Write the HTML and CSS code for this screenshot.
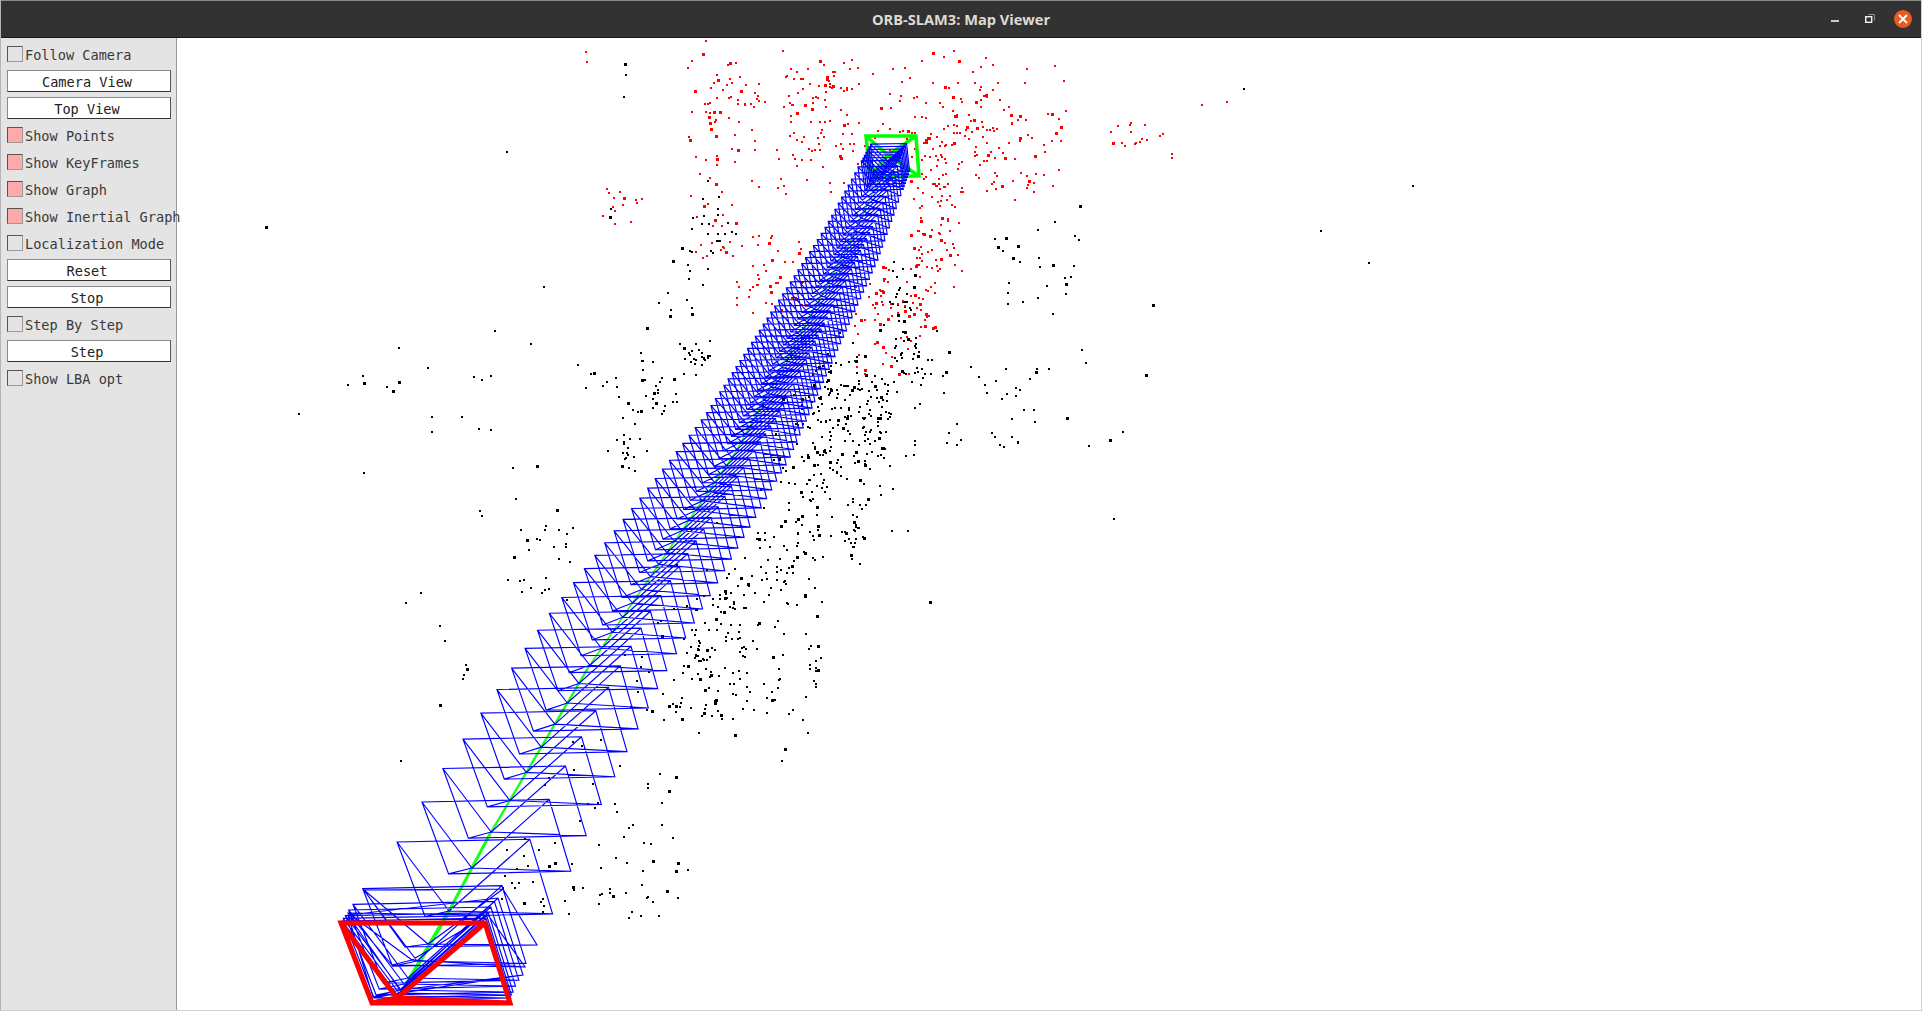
FILE: index.html
```html
<!DOCTYPE html>
<html lang="en">
<head>
    <meta charset="UTF-8">
    <title>ORB-SLAM3: Map Viewer</title>
    <link rel="stylesheet" href="styles.css">
</head>
<body>
<div class="window">
    <header class="titlebar">
        <span></span>
        <h1 class="title">ORB-SLAM3: Map Viewer</h1>
        <div class="controls">
            <svg class="ctl ctl-min" width="10" height="4" viewBox="0 0 10 4"><path d="M1 2h8" stroke="#f2f2f2" stroke-width="1.6"/></svg>
            <svg class="ctl ctl-max" width="12" height="12" viewBox="0 0 12 12"><path d="M4.5 1.5h6v6" fill="none" stroke="#8f8f8f"/><rect x="1.7" y="3.7" width="6" height="5.6" fill="none" stroke="#f2f2f2" stroke-width="1.4"/></svg>
            <svg class="ctl ctl-close" width="20" height="20" viewBox="0 0 20 20"><circle cx="10" cy="10" r="9" fill="#ea5a22"/><path d="M6 6l8 8M14 6l-8 8" stroke="#fff" stroke-width="1.8"/></svg>
        </div>
    </header>
    <div class="content">
        <aside class="panel">
            <div class="row"><span class="check"></span><span class="label">Follow Camera</span></div>
            <div class="row"><button class="btn">Camera View</button></div>
            <div class="row"><button class="btn">Top View</button></div>
            <div class="row"><span class="check on"></span><span class="label">Show Points</span></div>
            <div class="row"><span class="check on"></span><span class="label">Show KeyFrames</span></div>
            <div class="row"><span class="check on"></span><span class="label">Show Graph</span></div>
            <div class="row"><span class="check on"></span><span class="label">Show Inertial Graph</span></div>
            <div class="row"><span class="check"></span><span class="label">Localization Mode</span></div>
            <div class="row"><button class="btn">Reset</button></div>
            <div class="row"><button class="btn">Stop</button></div>
            <div class="row"><span class="check"></span><span class="label">Step By Step</span></div>
            <div class="row"><button class="btn">Step</button></div>
            <div class="row"><span class="check"></span><span class="label">Show LBA opt</span></div>
        </aside>
        <main class="viewport">
            <svg id="map" class="map" viewBox="177 38 1744 972" width="1744" height="972"></svg>
        </main>
    </div>
</div>
<script src="script.js"></script>
</body>
</html>
```

FILE: styles.css
```css
html, body {
    margin: 0;
    height: 100%;
    overflow: hidden;
    background-color: #fff;
}

.window {
    height: 1011px;
    display: flex;
    flex-direction: column;
    box-sizing: border-box;
    border-left: 1px solid #b5b5b5;
    border-right: 1px solid #cfcfcf;
    border-bottom: 1px solid #cfcfcf;
}

.titlebar {
    height: 38px;
    flex: none;
    box-sizing: border-box;
    display: grid;
    grid-template-columns: 1fr auto 1fr;
    align-items: center;
    background-color: #333232;
    border-top: 1px solid #8a8a8a;
    border-bottom: 1px solid #161616;
}

.title {
    margin: 0;
    font-family: "Open Sans", "Noto Sans", sans-serif;
    font-size: 14.6px;
    font-weight: 700;
    color: #dfdbd2;
}

.controls {
    display: flex;
    align-items: center;
    justify-content: flex-end;
    padding-right: 8px;
}

.ctl {
    display: block;
}

.ctl-min {
    margin-right: 24px;
    margin-top: 3px;
}

.ctl-max {
    margin-right: 17px;
}

.content {
    flex: 1;
    display: flex;
    min-height: 0;
}

.panel {
    width: 176px;
    flex: none;
    box-sizing: border-box;
    padding: 5px 0 0 6px;
    background-color: #e4e4e4;
    border-right: 1px solid #999;
    position: relative;
    z-index: 1;
    font-family: "DejaVu Sans Mono", "Liberation Mono", monospace;
    font-size: 13.6px;
    color: #3a3a3a;
}

.row {
    height: 27px;
    display: flex;
    align-items: flex-start;
    white-space: nowrap;
}

.check {
    width: 16px;
    height: 16px;
    flex: none;
    box-sizing: border-box;
    margin-top: 3px;
    border: 1px solid #9a9a9a;
    border-top-color: #555;
    border-left-color: #555;
}

.check.on {
    background-color: #ffaaaa;
}

.label {
    margin-left: 2px;
    line-height: 18px;
    margin-top: 3px;
}

.btn {
    width: 164px;
    height: 22px;
    padding: 2px 4px 0 0;
    box-sizing: border-box;
    background-color: #fff;
    border: 1px solid #8c8c8c;
    border-bottom-color: #333;
    border-right-color: #555;
    border-radius: 0;
    font: inherit;
    color: #222;
}

.viewport {
    flex: 1;
    min-width: 0;
    background-color: #fff;
}

.map {
    display: block;
}
```

FILE: script.js
```js
// map viewer scene, all coordinates are page pixels
var svg = document.getElementById('map');
var NS = 'http://www.w3.org/2000/svg';

// fixed seed so the scatter is the same every time
var seed = 20317;
function rnd() {
    seed = (seed + 0x6D2B79F5) | 0;
    var t = Math.imul(seed ^ (seed >>> 15), 1 | seed);
    t = (t + Math.imul(t ^ (t >>> 7), 61 | t)) ^ t;
    return ((t ^ (t >>> 14)) >>> 0) / 4294967296;
}
function gauss() {
    return (rnd() + rnd() + rnd() + rnd() - 2) / 0.58;
}

var K = 1922 / 1568;

function addPath(d, attrs) {
    var p = document.createElementNS(NS, 'path');
    p.setAttribute('d', d);
    p.setAttribute('fill', 'none');
    for (var k in attrs) {
        p.setAttribute(k, attrs[k]);
    }
    svg.appendChild(p);
}

function dot(x, y, big) {
    var s = big ? 3 : 2;
    x = Math.round(x);
    y = Math.round(y);
    return 'M' + x + ' ' + y + 'h' + s + 'v' + s + 'h-' + s + 'z';
}

function pointsPath(list) {
    var d = '';
    list.forEach(function (p) {
        d += dot(p[0] * K, p[1] * K, rnd() < 0.15);
    });
    return d;
}

function box(list, n, x0, x1, y0, y1) {
    for (var i = 0; i < n; i++) {
        list.push([x0 + rnd() * (x1 - x0), y0 + rnd() * (y1 - y0)]);
    }
}

function blob(list, n, cx, cy, sx, sy) {
    for (var i = 0; i < n; i++) {
        list.push([cx + gauss() * sx, cy + gauss() * sy]);
    }
}

// black map points (picture coordinates of the 1568 wide view)
var black = [
    [1014, 72], [1152, 151], [1077, 188], [1116, 214], [216, 184], [413, 123], [509, 51], [510, 60], [508, 78],
    [443, 233], [243, 337], [296, 385], [403, 269], [432, 280], [325, 283], [283, 313], [295, 306], [296, 312],
    [315, 315], [320, 318], [348, 299], [325, 311], [386, 307], [392, 309], [400, 306], [352, 339], [352, 352],
    [390, 349], [400, 350], [376, 339], [418, 381], [437, 379], [420, 406], [391, 416], [392, 420], [330, 491],
    [343, 483], [358, 510], [362, 522], [380, 545], [377, 553], [358, 574], [326, 620], [454, 415], [462, 435],
    [467, 430], [414, 472], [440, 440], [908, 423], [934, 305], [940, 248], [915, 352], [905, 358], [888, 363],
    [830, 360], [870, 340], [858, 255], [880, 167], [860, 180], [830, 200], [820, 300], [855, 300], [882, 285],
    [885, 295], [780, 362], [745, 370], [740, 432], [758, 490], [670, 490], [660, 545], [657, 568], [640, 610],
    [637, 620], [498, 170], [497, 176], [585, 170], [600, 190], [445, 428], [461, 443], [378, 550], [379, 542]
];
for (var i = 0; i < 300; i++) {
    var t = rnd();
    black.push([715 - t * 150 + gauss() * 30, 300 + t * 280 + gauss() * 12]);
}
blob(black, 70, 670, 350, 22, 34);
blob(black, 30, 695, 430, 4, 14);
blob(black, 40, 715, 345, 8, 22);
blob(black, 30, 680, 320, 12, 18);
blob(black, 30, 745, 290, 12, 12);
blob(black, 30, 735, 250, 6, 22);
box(black, 26, 770, 850, 295, 365);
box(black, 24, 810, 880, 180, 250);
blob(black, 24, 550, 255, 12, 24);
blob(black, 10, 525, 300, 8, 16);
blob(black, 24, 510, 365, 7, 20);
blob(black, 16, 540, 325, 7, 8);
blob(black, 16, 570, 288, 5, 6);
blob(black, 20, 580, 185, 10, 16);
box(black, 8, 470, 510, 295, 320);
box(black, 20, 410, 470, 430, 490);
box(black, 40, 470, 565, 650, 750);
box(black, 26, 400, 470, 680, 745);
box(black, 36, 540, 670, 480, 600);
box(black, 14, 430, 560, 600, 660);
blob(black, 14, 570, 540, 3, 8);
blob(black, 12, 663, 525, 3, 14);
blob(black, 10, 594, 485, 3, 8);
addPath(pointsPath(black), { fill: '#000' });

// red points, the ones still in the local map
var red = [[575, 33], [477, 42], [478, 50], [1000, 82], [980, 85]];
box(red, 170, 560, 870, 40, 160);
box(red, 70, 640, 700, 48, 130);
box(red, 30, 570, 620, 60, 100);
blob(red, 100, 790, 110, 30, 20);
blob(red, 70, 765, 165, 12, 30);
blob(red, 36, 755, 230, 5, 24);
box(red, 60, 695, 745, 215, 305);
box(red, 45, 600, 660, 190, 255);
box(red, 14, 490, 525, 152, 186);
box(red, 18, 905, 955, 98, 128);
box(red, 20, 565, 600, 165, 215);
addPath(pointsPath(red), { fill: '#f00' });

// trajectory, y goes up the picture from the current camera
var track = [[398, 999], [449, 911], [490, 834], [588, 668], [735, 453], [846, 251], [888, 160]];
function trackX(y) {
    for (var i = 0; i < track.length - 1; i++) {
        var a = track[i], b = track[i + 1];
        if (y <= a[1] && y >= b[1]) {
            return a[0] + (b[0] - a[0]) * (a[1] - y) / (a[1] - b[1]);
        }
    }
    return track[track.length - 1][0];
}

function pyramid(tl, tr, br, bl, c) {
    var cs = c.join(' ');
    return 'M' + tl.join(' ') + 'L' + tr.join(' ') + 'L' + br.join(' ') + 'L' + bl.join(' ') + 'Z' +
        'M' + cs + 'L' + tl.join(' ') + 'M' + cs + 'L' + tr.join(' ') + 'M' + cs + 'L' + br.join(' ') + 'M' + cs + 'L' + bl.join(' ');
}

// the frames flatten out and shrink with distance, so the shape is blended by y
function mix(a, b, u) {
    return a + (b - a) * u;
}
function frame(cx, cy) {
    var u = (998 - cy) / 838;
    var w = mix(144, 36, u);
    var h = mix(80, 28, u);
    var left = cx - mix(56, 17, u);
    var top = cy - mix(75, 17, u);
    var tilt = mix(3, 0.6, u);
    return pyramid(
        [left, top],
        [left + w, top - tilt],
        [left + w + mix(25, 3, u), top + h - tilt],
        [left + mix(31, 3, u), top + h],
        [cx, cy]
    );
}

// inertial graph line, thins out with distance
for (var j = 0; j < track.length - 1; j++) {
    var p0 = track[j], p1 = track[j + 1];
    addPath('M' + p0.join(' ') + 'L' + p1.join(' '), {
        stroke: '#00ff00',
        'stroke-width': [4, 3, 2.4, 1.6, 1.4, 1.2][j],
        opacity: 0.9
    });
}

// current keyframe at the far end
addPath(pyramid([866, 136], [916, 136], [919, 176], [870, 176], [888, 155]), { stroke: '#00ff00', 'stroke-width': 3.5 });

var frames = '';
frames += pyramid([364, 890], [503, 889], [537, 945], [405, 947], [428, 944]);
frames += pyramid([348, 913], [488, 915], [525, 967], [392, 965], [412, 960]);
frames += pyramid([348, 915], [498, 898], [523, 975], [373, 997], [400, 990]);
[[398, 996], [401, 990], [404, 984], [399, 993], [408, 978], [417, 961], [449, 911]].forEach(function (f) {
    frames += frame(f[0], f[1]);
});
var y = 868;
while (y > 160) {
    frames += frame(trackX(y), y);
    var step = 36 * Math.exp(0.0037 * (y - 868));
    y -= y < 185 ? 3 : Math.max(6.5, step);
}
addPath(frames, { stroke: '#0000ff', 'stroke-width': 1.15 });

// current camera
addPath(pyramid([341, 923], [485, 923], [510, 1003], [372, 1003], [397, 998]), { stroke: '#ff0000', 'stroke-width': 5, 'stroke-linejoin': 'miter' });
```
